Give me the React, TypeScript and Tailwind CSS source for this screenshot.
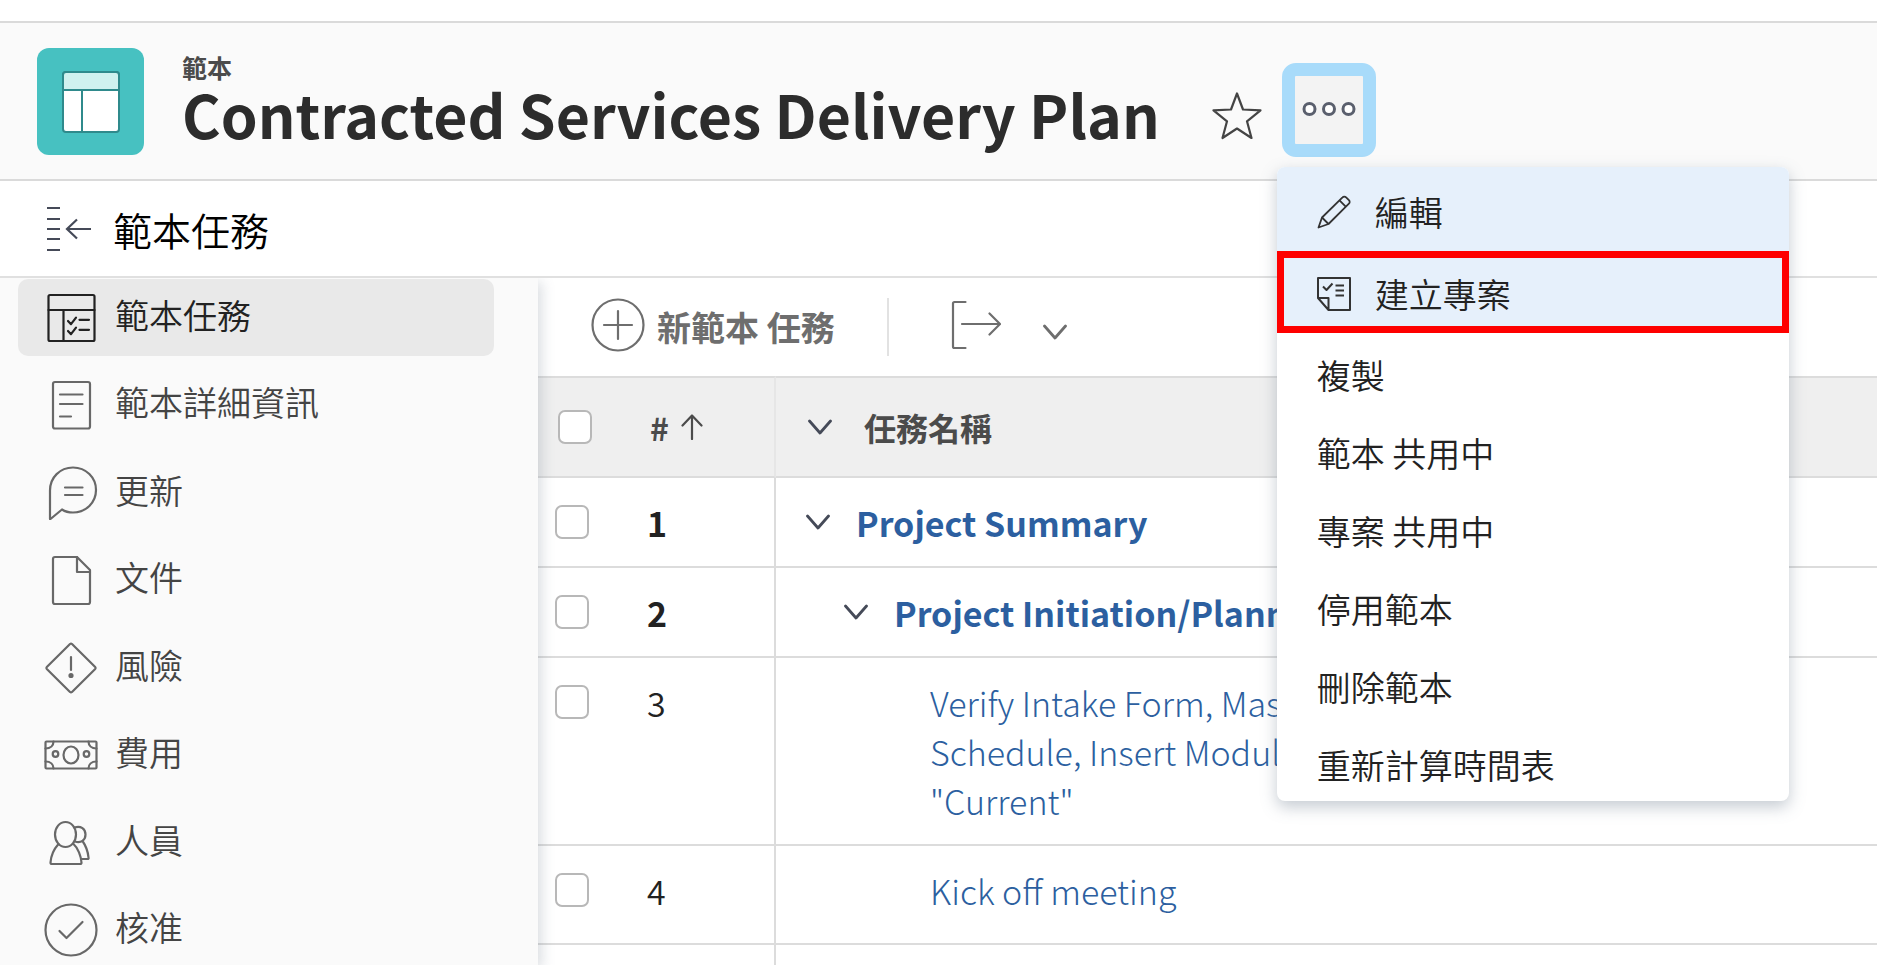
import { useState, type ReactNode } from "react";

type IconProps = { children: ReactNode; className?: string };

function NavIcon({ children, className = "" }: IconProps) {
  return (
    <svg
      viewBox="0 0 54 54"
      aria-hidden="true"
      className={`size-[54px] shrink-0 ${className}`}
      fill="none"
      stroke="currentColor"
      strokeWidth="2.200"
      strokeLinecap="round"
      strokeLinejoin="round"
    >
      {children}
    </svg>
  );
}

const NAV_ITEMS: { label: string; icon: ReactNode }[] = [
  {
    label: "範本任務",
    icon: (
      <>
        <rect x="4.5" y="4" width="46" height="46" rx="1.5" />
        <path d="M4.5 19h46M19.5 19v31M24 30l3 3.200 5-6.500M24 40l3 3.200 5-6.500M35.500 28.800h9.500M35.500 38.800h9.500" />
      </>
    ),
  },
  {
    label: "範本詳細資訊",
    icon: (
      <>
        <rect x="9" y="4" width="37" height="46.500" rx="2" />
        <path d="M16 16.500h22.500M16 26h22.500M16 38.500h11" />
      </>
    ),
  },
  {
    label: "更新",
    icon: (
      <path d="M6 53V24.500C6 11.500 16 1.500 29 1.500c13 0 23 10 23 22.500S42 46.500 29 46.500c-4 0-8-1-11-3L6.500 53M21 21.500h17.500M21 29h17.500" />
    ),
  },
  {
    label: "文件",
    icon: (
      <>
        <path d="M33 4H11a2 2 0 0 0-2 2v43a2 2 0 0 0 2 2h33a2 2 0 0 0 2-2V17Z" />
        <path d="M33 4v15h13" />
      </>
    ),
  },
  {
    label: "風險",
    icon: (
      <>
        <path d="M26 3 2.800 26a1.500 1.500 0 0 0 0 2L26 51a1.500 1.500 0 0 0 2 0L51.200 28a1.500 1.500 0 0 0 0-2L28 3a1.500 1.500 0 0 0-2 0Z" />
        <path d="M27 16v13" />
        <circle cx="27" cy="34.500" r="1.500" fill="currentColor" />
      </>
    ),
  },
  {
    label: "費用",
    icon: (
      <>
        <rect x="1.500" y="13.500" width="51" height="27" rx="1" />
        <ellipse cx="27" cy="27" rx="7.500" ry="8.500" />
        <circle cx="11.500" cy="26" r="2.800" />
        <circle cx="42.500" cy="26" r="2.800" />
        <path d="M9.500 13.500c0 4-3 7-8 7M44.500 13.500c0 4 3 7 8 7M9.500 40.500c0-4-3-7-8-7M44.500 40.500c0-4 3-7 8-7" />
      </>
    ),
  },
  {
    label: "人員",
    icon: (
      <>
        <ellipse cx="21.500" cy="18.500" rx="10.500" ry="12.500" />
        <path d="M14.500 28C10 33 7 40 6.500 46.500a1.500 1.500 0 0 0 1.500 1.500h28a1.500 1.500 0 0 0 1.500-1.500C37 40 34 32 29.500 28" />
        <path d="M30.500 11.500C37 9.500 41.500 13 41.500 18.500S37 27.500 31 25.500M38.500 25c3.500 5 5.500 11 6 16.500a1 1 0 0 1-1 1.500H37" />
      </>
    ),
  },
  {
    label: "核准",
    icon: (
      <>
        <circle cx="27" cy="27" r="25.500" />
        <path d="m15.500 28 7 7L38.500 19" />
      </>
    ),
  },
];

type Task = { id: number; name: string; level: number; parent: boolean };

const TASKS: Task[] = [
  { id: 1, name: "Project Summary", level: 0, parent: true },
  { id: 2, name: "Project Initiation/Planning", level: 1, parent: true },
  {
    id: 3,
    name: 'Verify Intake Form, Master Schedule, Insert Modules "Current"',
    level: 2,
    parent: false,
  },
  { id: 4, name: "Kick off meeting", level: 2, parent: false },
];

const MENU_ITEMS = ["複製", "範本 共用中", "專案 共用中", "停用範本", "刪除範本", "重新計算時間表"];

function Chevron({ className = "" }: { className?: string }) {
  return (
    <svg
      viewBox="0 0 24 16"
      aria-hidden="true"
      className={`h-4 w-6 shrink-0 ${className}`}
      fill="none"
      stroke="currentColor"
      strokeWidth="2.800"
      strokeLinecap="round"
      strokeLinejoin="round"
    >
      <path d="M1.500 2 12 14 22.500 2" />
    </svg>
  );
}

function Check({ label, className = "" }: { label: string; className?: string }) {
  return (
    <input
      type="checkbox"
      aria-label={label}
      className={`block size-[34px] appearance-none rounded-[7px] border-2 border-[#b8b8b8] bg-white checked:bg-[#2c5fa0] ${className}`}
    />
  );
}

function ActionsMenu() {
  return (
    <ul
      role="menu"
      className="absolute top-[104px] left-[-5px] z-20 w-[512px] rounded-lg bg-white text-[34px] leading-[50px] font-[350] text-[#222] shadow-[0_6px_16px_rgba(90,105,125,0.35)]"
    >
      <li role="none">
        <button
          role="menuitem"
          className="flex h-[84px] w-full items-center gap-6 rounded-t-lg bg-[#e6f0fb] px-10 pt-1.5"
        >
          <svg viewBox="0 0 34 34" aria-hidden="true" className="size-[34px]" fill="none" stroke="#333" strokeWidth="1.800" strokeLinejoin="round">
            <path d="M1.500 32.500 5 22.500 25.500 2.300a2.500 2.500 0 0 1 3.600 0l2.800 2.800a2.500 2.500 0 0 1 0 3.600L11.500 29Z" />
            <path d="m5 22.500 6.500 6.500M22.500 5.300l6.500 6.500" />
          </svg>
          編輯
        </button>
      </li>
      <li role="none">
        <button
          role="menuitem"
          className="flex h-[82px] w-full items-center gap-6 border-[7px] border-[#fe0000] bg-[#e6f0fb] px-[33px] pt-1"
        >
          <svg viewBox="0 0 34 34" aria-hidden="true" className="size-[34px]" fill="none" stroke="#333" strokeWidth="2" strokeLinejoin="round">
            <path d="M1 21V1h32v32H11.500L1 21h10.500v12" />
            <path d="m6 9.500 3.500 3.500 6-6.500M18.500 8.500H27M18.500 13.500H27M18.500 18.500H27" />
          </svg>
          建立專案
        </button>
      </li>
      {MENU_ITEMS.map((label) => (
        <li role="none" key={label}>
          <button role="menuitem" className="flex h-[78px] w-full items-center px-10 pt-1.5">
            {label}
          </button>
        </li>
      ))}
    </ul>
  );
}

export default function App() {
  const [selected, setSelected] = useState(0);

  return (
    <div className="overflow-x-hidden bg-white pt-[21px] pr-[3px] pb-[10px] font-['Noto_Sans_CJK_TC','Noto_Sans',sans-serif] text-[#222]">
      <header className="flex h-[160px] items-start border-y-2 border-[#dadada] bg-[#fafafa] pl-[37px]">
        <div className="mt-[25px] flex size-[107px] shrink-0 items-center justify-center rounded-xl bg-[#47c1c1]">
          <svg viewBox="0 0 58 62" aria-hidden="true" className="h-[62px] w-[58px]" stroke="#2f8a8c" strokeWidth="2">
            <rect x="1" y="1" width="56" height="60" rx="3" fill="#fff" />
            <path d="M1 19V4a3 3 0 0 1 3-3h50a3 3 0 0 1 3 3v15Z" fill="#d0f1ef" />
            <path d="M20 19v42" />
          </svg>
        </div>
        <div className="mt-7 ml-[38px] whitespace-nowrap">
          <p className="text-[25px] leading-[32px] font-bold text-[#4b4b4b]">範本</p>
          <h1 className="text-[59px] leading-[62px] font-bold text-[#2c2c2c]">Contracted Services Delivery Plan</h1>
        </div>
        <button aria-label="加入最愛" className="mt-[68px] ml-[52px]">
          <svg viewBox="0 0 50 50" aria-hidden="true" className="size-[50px]" fill="none" stroke="#444" strokeWidth="2.200" strokeLinejoin="round">
            <path d="M25 2.500 31 18.500 48.500 19.300 35 30.300 39.500 47 25 37.500 10.500 47 15 30.300 1.500 19.300 19 18.500Z" />
          </svg>
        </button>
        <div className="relative mt-10 ml-5">
          <button
            aria-label="更多"
            aria-haspopup="menu"
            aria-expanded="true"
            className="flex h-[94px] w-[94px] items-center justify-center rounded-[14px] border-[13px] border-[#a8dbfa] bg-[#f3f3f3]"
          >
            <svg viewBox="0 0 54 16" aria-hidden="true" className="mb-0.5 h-4 w-[54px] shrink-0" fill="#fff" stroke="#5a5f6d" strokeWidth="3">
              <circle cx="7.500" cy="8" r="5.500" />
              <circle cx="27" cy="8" r="5.500" />
              <circle cx="46.500" cy="8" r="5.500" />
            </svg>
          </button>
          <ActionsMenu />
        </div>
      </header>

      <div className="flex h-[97px] items-center gap-[21px] border-b-2 border-[#e0e0e0] pl-[46px]">
        <button aria-label="收合側邊欄">
          <svg viewBox="0 0 46 46" aria-hidden="true" className="size-[46px]" fill="none" stroke="#454a58" strokeWidth="2.200">
            <path d="M1 2h13M1 13h13M1 23h13M1 33h13M1 44h13M45 23H21M31 13.500 21 23l10 9.500" />
          </svg>
        </button>
        <h2 className="text-[39px] leading-[56px] font-[350] text-black">範本任務</h2>
      </div>

      <div className="flex overflow-hidden">
        <aside className="z-10 w-[538px] shrink-0 bg-[#fafafa] shadow-[4px_4px_12px_rgba(90,105,125,0.22)]">
          <nav className="h-[686px] overflow-hidden pt-px pr-11 pl-[18px]">
            <ul className="grid h-[700px] grid-rows-8">
              {NAV_ITEMS.map((item, i) => (
                <li key={item.label}>
                  <a
                    href={`#section-${i}`}
                    onClick={() => setSelected(i)}
                    aria-current={i === selected ? "page" : undefined}
                    className={`flex h-[77px] items-center gap-[17px] rounded-[10px] pl-[26px] text-[34px] leading-[50px] font-[350] ${
                      i === selected ? "bg-[#e9e9e9] text-[#222]" : "text-[#444]"
                    }`}
                  >
                    <NavIcon className={i === selected ? "text-[#222]" : "text-[#686868]"}>{item.icon}</NavIcon>
                    <span className="pb-1.5">{item.label}</span>
                  </a>
                </li>
              ))}
            </ul>
          </nav>
        </aside>

        <main className="min-w-0 flex-1">
          <div className="flex h-[98px] items-center pb-1 pl-[53px]">
            <button className="flex items-center gap-3 text-[34px] leading-[50px] font-bold text-[#6e6e6e]">
              <NavIcon>
                <circle cx="27" cy="27" r="25.500" />
                <path d="M27 13v28M13 27h28" />
              </NavIcon>
              <span className="pt-1">新範本 任務</span>
            </button>
            <div className="mt-1 ml-[52px] h-[58px] w-0.5 bg-[#e2e2e2]" />
            <button aria-label="匯出" className="ml-[62px] flex items-center gap-[42px] text-[#6e6e6e]">
              <svg viewBox="0 0 50 50" aria-hidden="true" className="size-[50px]" fill="none" stroke="currentColor" strokeWidth="2.200" strokeLinecap="round" strokeLinejoin="round">
                <path d="M14.500 2H3.500a1.500 1.500 0 0 0-1.500 1.500v43A1.500 1.500 0 0 0 3.500 48h11M11 24h38M38.500 13.500 49 24 38.500 34.500" />
              </svg>
              <Chevron className="mt-3.5" />
            </button>
          </div>

          <table className="w-full table-fixed border-separate border-spacing-0 text-left">
            <colgroup>
              <col className="w-[109px]" />
              <col className="w-[129px]" />
              <col />
            </colgroup>
            <thead>
              <tr className="h-[102px] bg-[#efefef] text-[#4b4b4b]">
                <th scope="col" className="border-y-2 border-[#dcdcdc] p-0 pl-5">
                  <Check label="全選" />
                </th>
                <th scope="col" className="border-y-2 border-r-2 border-y-[#dcdcdc] border-r-[#e6e6e6] p-0">
                  <span className="flex items-center gap-3 pl-[3px] text-[32px] leading-[48px]">
                    #
                    <svg viewBox="0 0 22 26" aria-hidden="true" className="h-[26px] w-[22px]" fill="none" stroke="currentColor" strokeWidth="2.200" strokeLinecap="round" strokeLinejoin="round">
                      <path d="M11 25V1.500M1.500 11.500 11 1.500l9.500 10" />
                    </svg>
                  </span>
                </th>
                <th scope="col" className="border-y-2 border-[#dcdcdc] p-0">
                  <span className="flex items-center gap-8 pl-8 text-[32px] leading-[48px] font-bold">
                    <Chevron className="text-[#454a58]" />
                    任務名稱
                  </span>
                </th>
              </tr>
            </thead>
            <tbody className="text-[34px] leading-[49px]">
              {TASKS.map((task) => (
                <tr key={task.id} className={`align-top ${task.parent ? "font-bold" : "font-light"}`}>
                  <td className="border-b-2 border-[#dcdcdc] p-0 pt-[27px] pl-[17px]">
                    <Check label={`選取 ${task.name}`} />
                  </td>
                  <td className={`border-r-2 border-b-2 border-[#dcdcdc] p-0 pt-5 ${task.parent ? "" : "font-[350]"}`}>
                    {task.id}
                  </td>
                  <td className={`border-b-2 border-[#dcdcdc] p-0 pt-5 ${task.id === 4 ? "pb-7" : "pb-[19px]"}`}>
                    <div
                      className={`flex items-start gap-[26px] ${
                        task.level === 0 ? "pl-[30px]" : task.level === 1 ? "pl-[68px]" : "pl-[154px]"
                      }`}
                    >
                      {task.parent && (
                        <button aria-label="收合" className="mt-4 shrink-0 text-[#454a58]">
                          <Chevron />
                        </button>
                      )}
                      <a href={`#task-${task.id}`} className={`text-[#2c5fa0] ${task.parent ? "whitespace-nowrap" : "max-w-[440px]"}`}>
                        {task.name}
                      </a>
                    </div>
                  </td>
                </tr>
              ))}
              <tr className="h-5">
                <td className="p-0" />
                <td className="border-r-2 border-[#dcdcdc] p-0" />
                <td className="p-0" />
              </tr>
            </tbody>
          </table>
        </main>
      </div>
    </div>
  );
}
